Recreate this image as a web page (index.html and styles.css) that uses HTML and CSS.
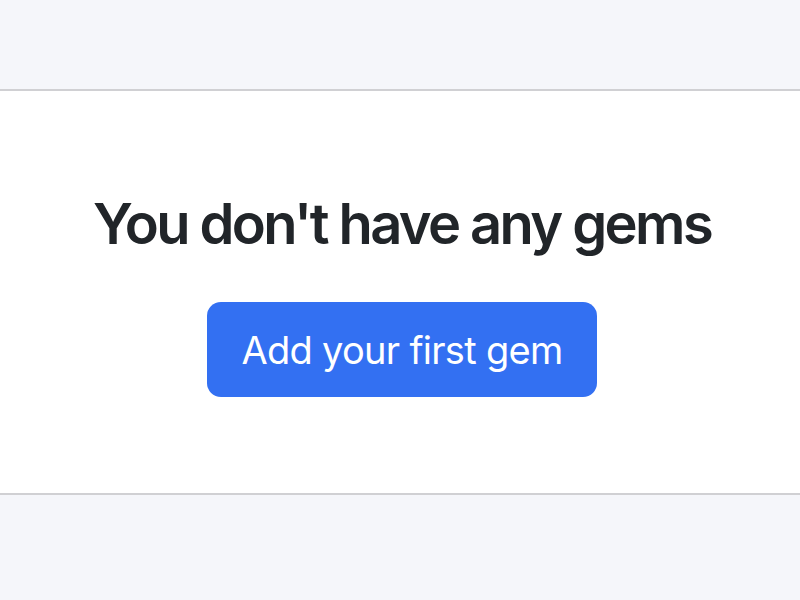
FILE: index.html
```html
<!DOCTYPE html>
<html>
<head>
<meta charset="utf-8">
<link rel="stylesheet" href="styles.css">
</head>
<body>
<div class="page">
  <div class="top"></div>
  <section class="panel">
    <h2 class="title">You don't have any gems</h2>
    <button class="btn">Add your first gem</button>
  </section>
  <div class="bottom"></div>
</div>
</body>
</html>
```
FILE: styles.css
```css
html, body {
  margin: 0;
  padding: 0;
  background: #f5f6fa;
  font-family: Inter, "Liberation Sans", sans-serif;
}
.page {
  display: flex;
  flex-direction: column;
  height: 600px;
}
.top {
  height: 89px;
}
.panel {
  background: #fff;
  border-top: 2px solid #d0d0d3;
  border-bottom: 2px solid #d0d0d3;
  padding: 4px 0 0 4px;
  box-sizing: border-box;
  height: 406px;
  display: flex;
  flex-direction: column;
  align-items: center;
  justify-content: center;
}
.title {
  margin: 0 0 44px;
  font-size: 56px;
  font-weight: 560;
  color: #212529;
  line-height: 1.2;
  letter-spacing: -2.6px;
}
.btn {
  width: 390px;
  height: 95px;
  border: none;
  border-radius: 14px;
  background: #3370f2;
  color: #fff;
  font-family: Inter, "Liberation Sans", sans-serif;
  font-size: 38px;
  font-weight: 400;
  letter-spacing: -0.7px;
  cursor: pointer;
}
```
